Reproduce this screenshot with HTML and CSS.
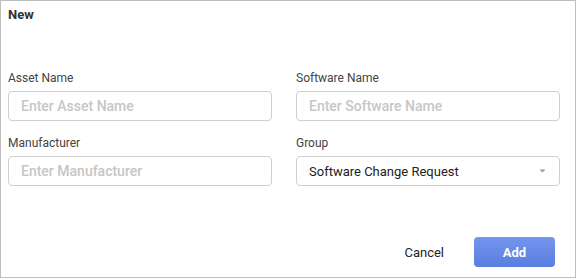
FILE: index.html
```html
<!DOCTYPE html>
<html lang="en">
<head>
  <meta charset="UTF-8">
  <title>New</title>
  <link rel="stylesheet" href="styles.css">
</head>
<body>
  <div class="dialog">
    <h2 class="dialog-title">New</h2>

    <form class="dialog-form">
      <div class="form-grid">
        <div class="form-group">
          <label for="asset">Asset Name</label>
          <input type="text" id="asset" placeholder="Enter Asset Name">
        </div>
        <div class="form-group">
          <label for="software">Software Name</label>
          <input type="text" id="software" placeholder="Enter Software Name">
        </div>
        <div class="form-group">
          <label for="manufacturer">Manufacturer</label>
          <input type="text" id="manufacturer" placeholder="Enter Manufacturer">
        </div>
        <div class="form-group">
          <label for="group">Group</label>
          <div class="select">
            <span>Software Change Request</span>
            <svg width="7" height="4" viewBox="0 0 7 4"><path d="M0.5 0.5h6L3.5 3.5z" fill="#999"/></svg>
          </div>
        </div>
      </div>

      <div class="actions">
        <button type="button" class="btn-cancel">Cancel</button>
        <button type="submit" class="btn-add">Add</button>
      </div>
    </form>
  </div>
</body>
</html>
```

FILE: styles.css
```css
* {
  margin: 0;
  padding: 0;
  box-sizing: border-box;
}

body {
  font-family: Roboto, 'Liberation Sans', sans-serif;
  background-color: #fff;
  color: #333;
}

.dialog {
  width: 576px;
  height: 278px;
  border: 1px solid #bdbdbd;
  padding: 6px 16px 0 7px;
  display: flex;
  flex-direction: column;
}

.dialog-title {
  font-size: 13px;
  font-weight: bold;
  color: #333;
  line-height: 15px;
}

.dialog-form {
  flex: 1;
  display: flex;
  flex-direction: column;
}

.form-grid {
  display: grid;
  grid-template-columns: 264px 264px;
  column-gap: 24px;
  row-gap: 15px;
  margin-top: 49px;
}

.form-group {
  display: flex;
  flex-direction: column;
}

label {
  font-size: 12px;
  color: #444;
  line-height: 14px;
  margin-bottom: 6px;
}

input, .select {
  height: 30px;
  border: 1px solid #cfcfcf;
  border-radius: 4px;
  padding: 0 12px;
  font-family: inherit;
  font-size: 14px;
  color: #333;
  outline: none;
}

input::placeholder {
  color: #c6c6c6;
  font-weight: 500;
}

.select {
  display: flex;
  align-items: center;
  justify-content: space-between;
  font-size: 13px;
  color: #222;
  padding-right: 13px;
}

.actions {
  display: flex;
  justify-content: flex-end;
  align-items: center;
  gap: 30px;
  margin-top: 51px;
  padding-right: 4px;
}

button {
  font-family: inherit;
  font-size: 13px;
  border: none;
  cursor: pointer;
}

.btn-cancel {
  background: none;
  color: #222;
}

.btn-add {
  width: 81px;
  height: 30px;
  border-radius: 4px;
  color: #fff;
  font-weight: bold;
  background: linear-gradient(#7595ee, #5a7ee0);
}
```
